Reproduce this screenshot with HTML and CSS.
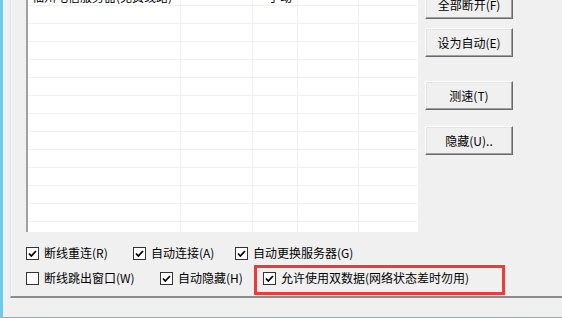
FILE: index.html
```html
<!DOCTYPE html>
<html lang="zh-CN">
<head>
	<meta charset="UTF-8">
	<title>设置</title>
	<link rel="stylesheet" href="styles.css">
</head>
<body>
<div class="window">
	<div class="group">
		<div class="top">
			<div class="list">
				<div class="row">
					<div class="cell c1">福州电信服务器(免费线路)</div>
					<div class="cell c2"></div>
					<div class="cell c3">手动</div>
					<div class="cell c4"></div>
					<div class="cell c5"></div>
				</div>
				<div class="row"><div class="cell c1"></div><div class="cell c2"></div><div class="cell c3"></div><div class="cell c4"></div><div class="cell c5"></div></div>
				<div class="row"><div class="cell c1"></div><div class="cell c2"></div><div class="cell c3"></div><div class="cell c4"></div><div class="cell c5"></div></div>
				<div class="row"><div class="cell c1"></div><div class="cell c2"></div><div class="cell c3"></div><div class="cell c4"></div><div class="cell c5"></div></div>
				<div class="row"><div class="cell c1"></div><div class="cell c2"></div><div class="cell c3"></div><div class="cell c4"></div><div class="cell c5"></div></div>
				<div class="row"><div class="cell c1"></div><div class="cell c2"></div><div class="cell c3"></div><div class="cell c4"></div><div class="cell c5"></div></div>
				<div class="row"><div class="cell c1"></div><div class="cell c2"></div><div class="cell c3"></div><div class="cell c4"></div><div class="cell c5"></div></div>
				<div class="row"><div class="cell c1"></div><div class="cell c2"></div><div class="cell c3"></div><div class="cell c4"></div><div class="cell c5"></div></div>
				<div class="row"><div class="cell c1"></div><div class="cell c2"></div><div class="cell c3"></div><div class="cell c4"></div><div class="cell c5"></div></div>
				<div class="row"><div class="cell c1"></div><div class="cell c2"></div><div class="cell c3"></div><div class="cell c4"></div><div class="cell c5"></div></div>
				<div class="row"><div class="cell c1"></div><div class="cell c2"></div><div class="cell c3"></div><div class="cell c4"></div><div class="cell c5"></div></div>
				<div class="row"><div class="cell c1"></div><div class="cell c2"></div><div class="cell c3"></div><div class="cell c4"></div><div class="cell c5"></div></div>
				<div class="row"><div class="cell c1"></div><div class="cell c2"></div><div class="cell c3"></div><div class="cell c4"></div><div class="cell c5"></div></div>
				<div class="row"><div class="cell c1"></div><div class="cell c2"></div><div class="cell c3"></div><div class="cell c4"></div><div class="cell c5"></div></div>
			</div>
			<div class="buttons">
				<button class="btn">全部断开(F)</button>
				<button class="btn gap-s">设为自动(E)</button>
				<button class="btn gap-l">测速(T)</button>
				<button class="btn gap-m">隐藏(U)..</button>
			</div>
		</div>

		<div class="options">
			<div class="opt-row">
				<label class="opt w-a"><span class="box"><svg viewBox="0 0 11 11"><polyline points="2,5.5 4.3,8 9,3"/></svg></span>断线重连(R)</label>
				<label class="opt w-b"><span class="box"><svg viewBox="0 0 11 11"><polyline points="2,5.5 4.3,8 9,3"/></svg></span>自动连接(A)</label>
				<label class="opt"><span class="box"><svg viewBox="0 0 11 11"><polyline points="2,5.5 4.3,8 9,3"/></svg></span>自动更换服务器(G)</label>
			</div>
			<div class="opt-row row2">
				<label class="opt w-c"><span class="box"></span>断线跳出窗口(W)</label>
				<label class="opt w-d"><span class="box"><svg viewBox="0 0 11 11"><polyline points="2,5.5 4.3,8 9,3"/></svg></span>自动隐藏(H)</label>
				<label class="opt marked"><span class="box"><svg viewBox="0 0 11 11"><polyline points="2,5.5 4.3,8 9,3"/></svg></span>允许使用双数据(网络状态差时勿用)</label>
			</div>
		</div>
	</div>
</div>
</body>
</html>
```

FILE: styles.css
```css
*{
	box-sizing: border-box;
}
body{
	margin: 0;
	background: #f0f0f0;
	font-family: "Noto Sans CJK SC", "Noto Sans", sans-serif;
	font-size: 12px;
	color: #000;
}
.window{
	width: 562px;
	height: 318px;
	overflow: hidden;
	border-left: 3px solid #6ccbef;
	border-bottom: 1px solid #7ab6d6;
}
.group{
	height: 312px;
	margin-left: 7px;
	border-left: 1px solid #e2e2e2;
	border-bottom: 2px solid #8c8c8c;
	padding-left: 15px;
	box-shadow: inset 1px 0 #fafafa;
}
.top{
	display: flex;
	margin-top: -14px;
}
.list{
	width: 392px;
	height: 246px;
	overflow: hidden;
	background: #fff;
	border-top: 2px solid #a0a0a0;
	border-left: 2px solid #a0a0a0;
	border-right: 1px solid #fff;
}
.row{
	display: grid;
	grid-template-columns: 153px 72px 45px 61px 1fr;
	height: 18px;
	border-bottom: 1px solid #f0f0f0;
}
.cell{
	line-height: 17px;
	white-space: nowrap;
	overflow: hidden;
	border-right: 1px solid #f0f0f0;
}
.c1{
	padding-left: 4px;
}
.c3{
	padding-left: 15px;
}
.c5{
	border-right: none;
}
.buttons{
	display: flex;
	flex-direction: column;
	padding-top: 4px;
	margin-left: 7px;
}
.btn{
	width: 88px;
	height: 29px;
	padding: 0;
	font-family: inherit;
	font-size: 12px;
	color: #000;
	background: #f0f0f0;
	border: 1px solid;
	border-color: #fff #696969 #696969 #fff;
	box-shadow: inset -1px -1px #a0a0a0, inset 1px 1px #e3e3e3;
}
.gap-s{
	margin-top: 9px;
}
.gap-l{
	margin-top: 24px;
}
.gap-m{
	margin-top: 16px;
}
.options{
	margin-top: 12px;
}
.opt-row{
	display: flex;
	height: 18px;
}
.row2{
	margin-top: 7px;
}
.opt{
	display: flex;
	align-items: center;
	white-space: nowrap;
	line-height: 18px;
}
.w-a{
	width: 107px;
}
.w-b{
	width: 102px;
}
.w-c{
	width: 134px;
}
.w-d{
	width: 103px;
}
.box{
	width: 13px;
	height: 13px;
	margin-right: 5px;
	border: 1px solid #333;
	background: #fff;
	display: flex;
	align-items: center;
	justify-content: center;
}
.box svg{
	width: 11px;
	height: 11px;
}
.box polyline{
	fill: none;
	stroke: #000;
	stroke-width: 1.8;
}
.marked{
	position: relative;
}
.marked:after{
	content: "";
	position: absolute;
	left: -9px;
	right: -36px;
	top: -4px;
	bottom: -8px;
	border: 3px solid #f03a3a;
}
```
